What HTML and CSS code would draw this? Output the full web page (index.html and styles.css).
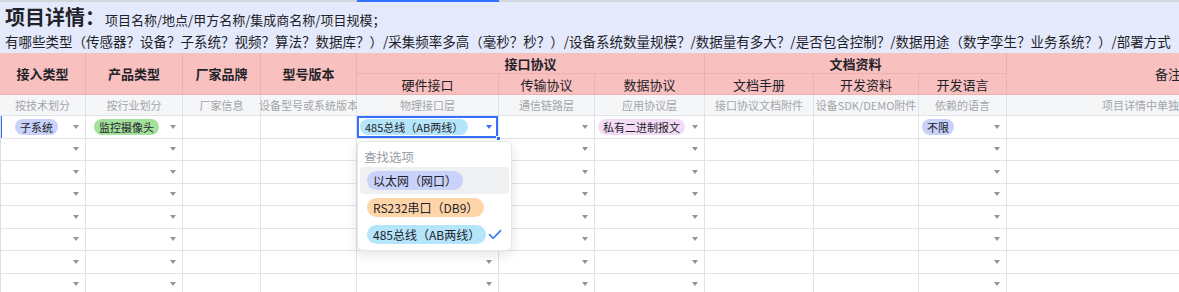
FILE: index.html
```html
<!DOCTYPE html>
<html lang="zh-CN">
<head>
  <meta charset="UTF-8" />
  <title>项目详情</title>
  <meta name="viewport" content="width=device-width, initial-scale=1.0"/>
  <link rel="stylesheet" href="styles.css">
</head>
<body>

  <div class="sheet" id="sheet">
    <!-- column header edge -->
    <div class="colbar"></div>
    <div class="colbar colbar-active"></div>

    <!-- Title band -->
    <div class="title">
      <div class="title-line"><strong>项目详情：</strong>项目名称/地点/甲方名称/集成商名称/项目规模；</div>
      <div class="title-desc">有哪些类型（传感器？设备？子系统？视频？算法？数据库？）/采集频率多高（毫秒？秒？）/设备系统数量规模？/数据量有多大？/是否包含控制？/数据用途（数字孪生？业务系统？）/部署方式（本地部署？云端部署？）</div>
    </div>

    <!-- Header rows -->
    <div class="hd hd-main span-rows">接入类型</div>
    <div class="hd hd-main span-rows">产品类型</div>
    <div class="hd hd-main span-rows">厂家品牌</div>
    <div class="hd hd-main span-rows">型号版本</div>
    <div class="hd hd-main span-cols">接口协议</div>
    <div class="hd hd-main span-cols">文档资料</div>
    <div class="hd hd-sub span-rows">备注</div>
    <div class="hd hd-sub">硬件接口</div>
    <div class="hd hd-sub">传输协议</div>
    <div class="hd hd-sub">数据协议</div>
    <div class="hd hd-sub">文档手册</div>
    <div class="hd hd-sub">开发资料</div>
    <div class="hd hd-sub">开发语言</div>

    <!-- Description row -->
    <div class="desc">按技术划分</div>
    <div class="desc">按行业划分</div>
    <div class="desc">厂家信息</div>
    <div class="desc">设备型号或系统版本</div>
    <div class="desc">物理接口层</div>
    <div class="desc">通信链路层</div>
    <div class="desc">应用协议层</div>
    <div class="desc">接口协议文档附件</div>
    <div class="desc">设备SDK/DEMO附件</div>
    <div class="desc">依赖的语言</div>
    <div class="desc">项目详情中单独说明的内容</div>

    <!-- First data row -->
    <div class="cell dd first row-active"><span class="tag tag-blue">子系统</span></div>
    <div class="cell dd second"><span class="tag tag-green">监控摄像头</span></div>
    <div class="cell"></div>
    <div class="cell"></div>
    <div class="cell dd selected">
      <span class="tag tag-cyan">485总线（AB两线）</span>
      <span class="handle"></span>
      <div class="dropdown">
        <div class="dropdown-search">查找选项</div>
        <div class="dropdown-item hover"><span class="tag tag-lg tag-blue">以太网（网口）</span></div>
        <div class="dropdown-item"><span class="tag tag-lg tag-orange">RS232串口（DB9）</span></div>
        <div class="dropdown-item">
          <span class="tag tag-lg tag-cyan">485总线（AB两线）</span>
          <svg class="check" width="14" height="11" viewBox="0 0 14 11"><path d="M1.5 5.6 L5.2 9.2 L12.6 1.6" fill="none" stroke="#3370ff" stroke-width="1.6" stroke-linecap="round" stroke-linejoin="round"/></svg>
        </div>
      </div>
    </div>
    <div class="cell dd"></div>
    <div class="cell dd"><span class="tag tag-pink">私有二进制报文</span></div>
    <div class="cell"></div>
    <div class="cell"></div>
    <div class="cell dd"><span class="tag tag-blue">不限</span></div>
    <div class="cell"></div>
  </div>

  <script>
    // empty rows below the first record
    const sheet = document.getElementById('sheet');
    const kinds = ['dd first', 'dd second', '', '', 'dd', 'dd', 'dd', '', '', 'dd', ''];

    for (let r = 0; r < 7; r++) {
      kinds.forEach(kind => {
        const cell = document.createElement('div');
        cell.className = ('cell ' + kind).trim();
        sheet.appendChild(cell);
      });
    }
  </script>
</body>
</html>
```

FILE: styles.css
```css
* {
  box-sizing: border-box;
}

body {
  margin: 0;
  font-family: "Noto Sans CJK SC", "Noto Sans", sans-serif;
  color: #1f2329;
  background: #fff;
  overflow: hidden;
}

.sheet {
  display: grid;
  grid-template-columns: 86px 97px 78px 96px 142px 96px 110px 109px 105px 88px 323px;
  grid-template-rows: 2px 51px 21px 21px 21px repeat(8, 22.5px);
  width: 1330px;
}

/* column header edge on top */
.colbar {
  grid-row: 1;
  grid-column: 1 / -1;
  background: #d3d6dc;
}

.colbar-active {
  grid-column: 5;
  background: #3370ff;
}

/* Title band */
.title {
  grid-row: 2;
  grid-column: 1 / -1;
  background: #e4eafb;
  padding: 3px 0 0 5px;
  white-space: nowrap;
  overflow: hidden;
}

.title-line {
  font-size: 13px;
  line-height: 24px;
}

.title-line strong {
  font-size: 20px;
  font-weight: 700;
}

.title-desc {
  font-size: 13.5px;
  line-height: 18px;
}

/* Header */
.hd {
  display: flex;
  align-items: center;
  justify-content: center;
  background: #f8c0bf;
  border-right: 1px solid #eeb1b0;
  border-bottom: 1px solid #eeb1b0;
  font-size: 13px;
  white-space: nowrap;
}

.hd-main {
  font-weight: 700;
}

.span-rows {
  grid-row: span 2;
}

.span-cols {
  grid-column: span 3;
}

/* Description row */
.desc {
  display: flex;
  align-items: center;
  justify-content: center;
  background: #f5f6f7;
  color: #a2a5aa;
  font-size: 11px;
  border-right: 1px solid #e1e3e6;
  border-bottom: 1px solid #e1e3e6;
  white-space: nowrap;
}

/* Data cells */
.cell {
  display: flex;
  align-items: center;
  padding: 0 6px 0 3px;
  border-right: 1px solid #e1e3e6;
  border-bottom: 1px solid #e1e3e6;
  white-space: nowrap;
}

.cell.first {
  padding-left: 14px;
  border-left: 1px solid #dcdee2;
}

.cell.second {
  padding-left: 8px;
}

.dd::after {
  content: "";
  margin-left: auto;
  border-left: 3.5px solid transparent;
  border-right: 3.5px solid transparent;
  border-top: 4px solid #8f959e;
}

.row-active {
  box-shadow: inset 1px 0 0 #3370ff;
}

.selected {
  position: relative;
  z-index: 3;
  box-shadow: inset 0 0 0 2px #3370ff;
}

.selected.dd::after {
  border-top-color: #3370ff;
}

.handle {
  position: absolute;
  right: -3px;
  bottom: -3px;
  width: 5px;
  height: 5px;
  background: #3370ff;
  border: 1px solid #fff;
}

/* Tags */
.tag {
  display: inline-block;
  height: 16px;
  line-height: 16px;
  padding: 0 5px;
  border-radius: 8px;
  font-size: 11px;
  color: #1f2329;
}

.tag-lg {
  height: 19px;
  line-height: 19px;
  padding: 0 6px;
  border-radius: 10px;
  font-size: 12px;
}

.tag-blue { background: #c8d2fb; }
.tag-green { background: #a3e19c; }
.tag-cyan { background: #b4e5fa; }
.tag-pink { background: #f4dbf6; }
.tag-orange { background: #fdd5a9; }

/* Dropdown */
.dropdown {
  position: absolute;
  top: calc(100% + 3px);
  left: 0;
  width: 155px;
  padding: 0 2px 2px;
  background: #fff;
  border: 1px solid #e4e6e9;
  border-radius: 6px;
  box-shadow: 0 4px 12px rgba(31, 35, 41, 0.12);
}

.dropdown-search {
  height: 25px;
  padding: 4px 0 0 4px;
  font-size: 12.5px;
  line-height: 22px;
  color: #9a9ea5;
}

.dropdown-item {
  display: flex;
  align-items: center;
  height: 27px;
  padding: 0 7px;
  border-radius: 4px;
}

.dropdown-item.hover {
  background: #eff0f1;
}

.check {
  margin-left: auto;
}
```
